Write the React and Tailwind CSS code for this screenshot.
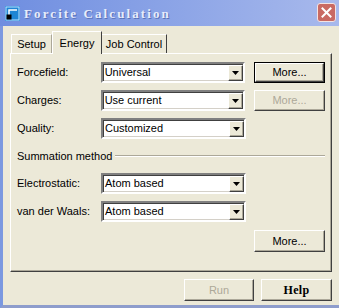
import React from "react";

const sans = { fontFamily: '"Liberation Sans", Arial, sans-serif' };

function Arrow() {
  return (
    <svg width="7" height="4" viewBox="0 0 7 4">
      <polygon points="0,0 7,0 3.5,4" fill="#000" />
    </svg>
  );
}

function Combo({ value }) {
  return (
    <div className="w-[145px] h-[21px] flex bg-white border-2 border-t-[#808080] border-l-[#808080] border-r-white border-b-white shadow-[inset_1px_1px_0_#404040,inset_-1px_-1px_0_#d4d0c8]">
      <div className="flex-1 pl-[2px] flex items-center text-[11px] text-black leading-none">{value}</div>
      <div className="w-[15px] mt-[1px] bg-[#ece9d8] border border-t-white border-l-white border-r-[#404040] border-b-[#404040] shadow-[inset_-1px_-1px_0_#aca899] flex items-center justify-center">
        <Arrow />
      </div>
    </div>
  );
}

function Btn({ children, def, disabled, w = "w-[71px]", h = "h-[21px]" }) {
  const inner = (
    <div
      className={`${def ? "w-full h-full" : `${w} ${h}`} flex items-center justify-center bg-[#ece9d8] border border-t-white border-l-white border-r-[#404040] border-b-[#404040] shadow-[inset_-1px_-1px_0_#aca899] text-[11px] leading-none ${disabled ? "text-[#aca899]" : "text-black"}`}
    >
      {children}
    </div>
  );
  if (def) {
    return <div className={`${w} ${h} border border-black`}>{inner}</div>;
  }
  return inner;
}

function Row({ label, value, children }) {
  return (
    <div className="flex items-center h-[21px]">
      <div className="w-[84px] text-[11px] text-black leading-none">{label}</div>
      <Combo value={value} />
      <div className="ml-[9px]">{children}</div>
    </div>
  );
}

export default function App() {
  return (
    <div className="w-[339px] h-[308px] flex flex-col bg-[#ece9d8] overflow-hidden" style={sans}>
      {/* Title bar */}
      <div className="h-[26px] flex items-center bg-gradient-to-r from-[#6f8ee0] to-[#a8b9ec] pl-[5px] pr-[3px] shrink-0">
        <svg width="15" height="15" viewBox="0 0 15 15" className="shrink-0">
          <rect x="0" y="0" width="15" height="15" fill="#1f86d4" />
          <rect x="1" y="1" width="13" height="13" fill="none" stroke="#bfe2ff" strokeWidth="1" />
          <path d="M4 12 V4 H12" fill="none" stroke="#ffffff" strokeWidth="1.5" />
          <rect x="1.5" y="8.5" width="5" height="5" fill="#000" />
        </svg>
        <div
          className="ml-[4px] text-[13px] font-bold tracking-[2.1px] text-[#e6ecfb] leading-none"
          style={{ fontFamily: '"Liberation Serif", "Times New Roman", serif', textShadow: "1px 1px 0 #5a73b8" }}
        >
          Forcite Calculation
        </div>
        <div className="ml-auto w-[19px] h-[19px] rounded-[3px] bg-[#c96a63] border border-[#f3e3e3] flex items-center justify-center mb-[2px]">
          <svg width="11" height="11" viewBox="0 0 11 11">
            <path d="M1.5 1.5 L9.5 9.5 M9.5 1.5 L1.5 9.5" stroke="#fff" strokeWidth="2" strokeLinecap="square" />
          </svg>
        </div>
      </div>

      {/* Body */}
      <div className="flex-1 flex flex-col border-l-[3px] border-l-[#7b98e0] border-b-[3px] border-b-[#8e9dcc] pl-[7px] pr-[7px] pt-[5px]">
        {/* Tabs */}
        <div className="flex items-end h-[22px] text-[11px] leading-none text-black">
          <div className="ml-[1px] w-[41px] h-[19px] border-t border-l border-white border-r border-r-[#aca899] flex items-center justify-center pt-[1px]">
            Setup
          </div>
          <div className="relative z-10 w-[50px] h-[23px] -mb-[1px] bg-[#ece9d8] border-t border-l border-white border-r border-r-[#404040] flex items-start justify-center pt-[6px]">
            Energy
          </div>
          <div className="w-[65px] h-[19px] border-t border-white border-r border-r-[#404040] flex items-center justify-center pt-[1px]">
            Job Control
          </div>
        </div>

        {/* Panel */}
        <div className="w-[322px] h-[219px] border-t border-l border-white border-r border-b border-r-[#404040] border-b-[#404040] shadow-[inset_-1px_-1px_0_#aca899] pl-[6px] pr-[6px] pt-[8px] flex flex-col">
          <Row label="Forcefield:" value="Universal">
            <Btn def>More...</Btn>
          </Row>
          <div className="mt-[7px]">
            <Row label="Charges:" value="Use current">
              <Btn disabled>More...</Btn>
            </Row>
          </div>
          <div className="mt-[7px]">
            <Row label="Quality:" value="Customized" />
          </div>

          <div className="mt-[10px] h-[14px] flex items-center text-[11px] leading-none text-black">
            <span>Summation method</span>
            <div className="flex-1 ml-[3px] h-[2px] border-t border-t-[#aca899] border-b border-b-white" />
          </div>

          <div className="mt-[10px]">
            <Row label="Electrostatic:" value="Atom based" />
          </div>
          <div className="mt-[7px]">
            <Row label="van der Waals:" value="Atom based" />
          </div>

          <div className="mt-[8px] flex justify-end">
            <Btn h="h-[22px]" w="w-[71px]">More...</Btn>
          </div>
        </div>

        {/* Bottom buttons */}
        <div className="mt-[7px] flex justify-end gap-[7px]">
          <Btn disabled w="w-[70px]" h="h-[22px]">Run</Btn>
          <Btn w="w-[71px]" h="h-[22px]">
            <span
              className="font-bold text-[12px] tracking-[0.3px]"
              style={{ fontFamily: '"Liberation Serif", "Times New Roman", serif' }}
            >
              Help
            </span>
          </Btn>
        </div>
      </div>
    </div>
  );
}
